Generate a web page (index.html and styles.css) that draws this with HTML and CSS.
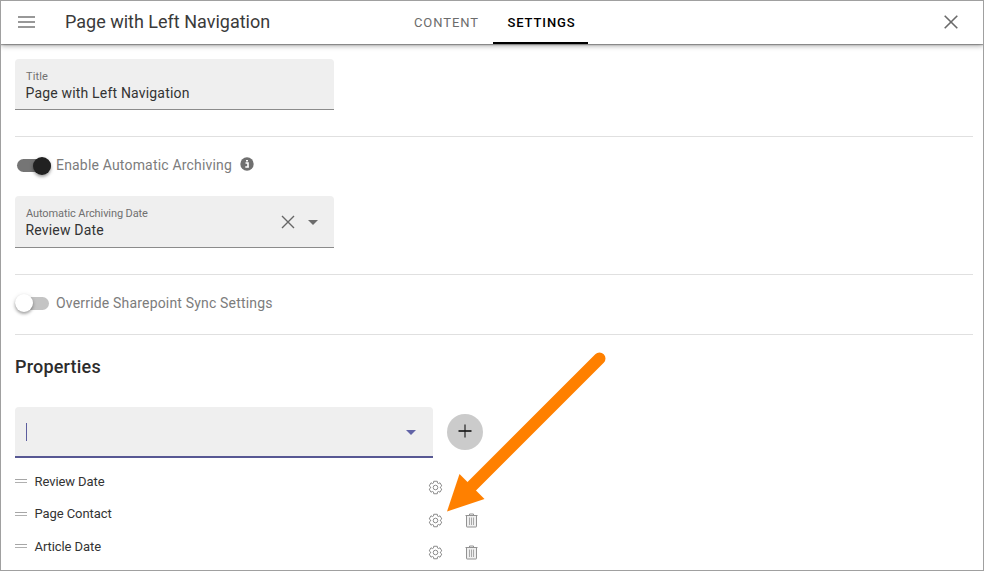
FILE: index.html
```html
<!DOCTYPE html>
<html lang="en">
<head>
<meta charset="utf-8">
<title>Page settings</title>
<link rel="stylesheet" href="styles.css">
</head>
<body>
<svg class="defs" width="0" height="0">
  <symbol id="gear" viewBox="-7.5 -7.5 15 15">
    <path d="M-1.79-6.25H1.79L1.99-4.48 2.88-3.96 4.52-4.68 6.31-1.57 4.87-.51V.51L6.31 1.57 4.52 4.68 2.88 3.96 1.99 4.48 1.79 6.25H-1.79L-1.99 4.48-2.88 3.96-4.52 4.68-6.31 1.57-4.87.51V-.51L-6.31-1.57-4.52-4.68-2.88-3.96-1.99-4.48Z"/>
    <circle r="2.3"/>
  </symbol>
  <symbol id="trash" viewBox="0 0 13 15">
    <path class="bin" d="M1.500 2.500v11q0 .5.500.5h9q.5 0 .5-.5V2.500"/>
    <path d="M.5 2.500h12M4.500 2.500v-1.500h4v1.500"/>
    <path class="slats" d="M4.500 4.500v7.500M6.500 4.500v7.500M8.500 4.500v7.500"/>
  </symbol>
</svg>
<div class="window">
  <header class="bar">
    <svg class="menu" viewBox="0 0 18 12"><path d="M0 1h17M0 6h17M0 11h17"/></svg>
    <h1 class="page-title">Page with Left Navigation</h1>
    <nav class="tabs">
      <a class="tab">CONTENT</a>
      <a class="tab active">SETTINGS</a>
    </nav>
    <svg class="close" viewBox="0 0 14 14"><path d="M.7.7l12.600 12.600M13.300.7L.7 13.300"/></svg>
  </header>
  <main class="content">
    <div class="field title-field">
      <div class="field-text"><label class="label">Title</label><span class="value">Page with Left Navigation</span></div>
    </div>
    <section class="toggle-section">
      <div class="toggle-row">
        <span class="switch on"><i class="knob"></i></span>
        <span class="toggle-label archive">Enable Automatic Archiving</span>
        <svg class="info" viewBox="0 0 14 14"><circle cx="7" cy="7" r="6.700"/><path d="M5.500 6h2.500v4M5.300 10h3.600M6 3.700h2"/></svg>
      </div>
      <div class="field date-field">
        <div class="field-text"><label class="label">Automatic Archiving Date</label><span class="value">Review Date</span></div>
        <svg class="clear" viewBox="0 0 14 14"><path d="M1 1l12 12M13 1L1 13"/></svg>
        <i class="caret"></i>
      </div>
    </section>
    <section class="sync">
      <span class="switch off"><i class="knob"></i></span>
      <span class="toggle-label override">Override Sharepoint Sync Settings</span>
    </section>
    <section class="properties">
      <h2 class="heading">Properties</h2>
      <div class="picker">
        <div class="field focus"><i class="cursor"></i><i class="caret"></i></div>
        <button class="add"><svg viewBox="0 0 14 14"><path class="stem" d="M7 .5v13"/><path d="M.5 7h13"/></svg></button>
      </div>
      <ul class="list">
        <li class="item"><i class="grip"></i><span class="name">Review Date</span><svg class="gear"><use href="#gear"/></svg></li>
        <li class="item"><i class="grip"></i><span class="name">Page Contact</span><svg class="gear"><use href="#gear"/></svg><svg class="trash"><use href="#trash"/></svg></li>
        <li class="item"><i class="grip"></i><span class="name">Article Date</span><svg class="gear"><use href="#gear"/></svg><svg class="trash"><use href="#trash"/></svg></li>
      </ul>
    </section>
  </main>
  <svg class="arrow" viewBox="0 0 160 162"><path class="shaft" d="M153.500 8.500L22 140"/><path class="head" d="M1 161.500L13.500 124 38.500 149Z"/></svg>
</div>
</body>
</html>
```

FILE: styles.css
```css
* { box-sizing: border-box; }
body { margin: 0; font-family: Roboto, "Liberation Sans", sans-serif; color: #2b2b2b; background: #fff; }
.defs { display: block; position: absolute; }
.window { position: relative; width: 984px; height: 571px; border: 1px solid #a0a0a0; overflow: hidden; }
svg { display: block; fill: none; flex: none; }

.bar { position: relative; display: flex; align-items: center; height: 43px; padding: 0 25px 0 16.5px; background: #fff; box-shadow: 0 1px 1px rgba(0,0,0,.3), 0 2px 5px rgba(0,0,0,.32); }
.menu { width: 18px; height: 12px; margin-bottom: 1px; stroke: #777; stroke-width: 1.6; }
.page-title { margin: 0 0 2px 29.5px; width: 333px; font-size: 18px; font-weight: 400; line-height: 41px; white-space: nowrap; color: #3a3a3a; }
.tabs { display: flex; flex: none; align-self: stretch; margin-left: -6px; }
.tab { display: flex; align-items: center; justify-content: center; width: 101px; padding: 2px 0 0 8px; font-size: 13px; font-weight: 400; letter-spacing: .95px; color: #6c6c6c; border-bottom: 2px solid transparent; }
.tab.active { width: 95px; padding-left: 2px; font-weight: 500; letter-spacing: .9px; color: #000; border-color: #000; }
.close { width: 14px; height: 14px; margin: 0 0 2px auto; stroke: #6a6a6a; stroke-width: 1.6; }

.content { padding: 15px 10px 0 14px; }
.field { display: flex; align-items: center; width: 319px; height: 51px; padding: 0 16px 0 11px; background: #efefef; border-radius: 4px 4px 0 0; border-bottom: 1px solid #8b8b8b; }
.field-text { display: flex; flex-direction: column; flex: 1; padding-top: 7px; }
.label { font-size: 11px; line-height: 13px; letter-spacing: -.1px; color: #707070; }
.title-field .label { letter-spacing: .1px; }
.value { font-size: 14px; line-height: 20px; letter-spacing: .18px; color: #333; margin-left: -.5px; }
.date-field .field-text { padding-top: 4px; }
.title-field .field-text { padding-top: 5px; }
.toggle-section { margin-top: 26px; border-top: 1px solid #e0e0e0; border-bottom: 1px solid #e0e0e0; height: 139px; padding-top: 17px; }
.toggle-row, .sync { display: flex; align-items: center; }
.toggle-row { height: 22px; }
.date-field { margin-top: 20px; height: 52px; }
.switch { display: flex; align-items: center; flex: none; width: 34px; height: 13px; margin-top: 1px; border-radius: 7px; background: #757575; }
.switch.on { margin-left: 2px; justify-content: flex-end; }
.switch.off { background: #c4c4c4; }
.knob { flex: none; width: 18px; height: 18px; border-radius: 50%; background: #212121; box-shadow: 0 2px 3px rgba(0,0,0,.3), 0 1px 5px rgba(0,0,0,.12); }
.off .knob { background: #fff; }
.toggle-label { font-size: 14px; line-height: 20px; letter-spacing: .18px; color: #7c7c7c; white-space: nowrap; }
.archive { margin-left: 5px; }
.override { margin-left: 7px; }
.info { width: 14px; height: 14px; margin: -3px 0 0 7.5px; }
.info circle { fill: #707070; }
.info path { stroke: #fff; stroke-width: 1.6; }
.clear { width: 14px; height: 14px; margin-right: 1.5px; stroke: #666; stroke-width: 1.4; }
.caret { width: 0; height: 0; margin: 1px 0 0 12px; border: 5px solid transparent; border-top-color: #6c6c6c; border-bottom: 0; }
.sync { height: 60px; border-bottom: 1px solid #e0e0e0; padding-bottom: 4px; }

.heading { margin: 20px 0 0; font-size: 18px; font-weight: 500; line-height: 24px; letter-spacing: .2px; color: #2c2c2c; }
.picker { display: flex; align-items: center; margin-top: 28px; }
.focus { width: 418px; border-bottom: 2px solid #575893; justify-content: space-between; padding-right: 17px; }
.cursor { width: 1px; height: 18px; background: #5c5d9e; }
.focus .caret { border-top-color: #6264a7; margin-top: 2px; }
.add { display: grid; place-items: center; width: 36px; height: 36px; margin: 0 0 2px 14px; padding: 0 0 1px; border: 0; border-radius: 50%; background: #cbcbcb; }
.add svg { width: 14px; height: 14px; stroke: #1b1b1b; stroke-width: 1.7; }
.add .stem { stroke: #444; stroke-width: 1.5; }
.list { list-style: none; margin: 7px 0 0; padding: 0; }
.item { display: flex; align-items: flex-start; height: 32.5px; }
.grip { width: 12px; height: 4px; margin-top: 14px; border-top: 1px solid #a6a6a6; border-bottom: 1px solid #b0b0b0; }
.name { width: 386px; margin: 6.5px 0 0 7.5px; font-size: 13px; line-height: 20px; letter-spacing: -.08px; color: #333; }
.gear { width: 15px; height: 15px; margin: 15px 0 0 7px; stroke: #8c8c8c; stroke-width: 1; }
.trash { width: 13px; height: 15px; margin: 15px 0 0 22px; stroke: #929292; stroke-width: 1; }
.bin { fill: #efefef; }
.slats { stroke: #a8a8a8; }
.arrow { position: absolute; left: 444.5px; top: 348.5px; width: 160px; height: 162px; }
.shaft { stroke: #ff8000; stroke-width: 12; stroke-linecap: round; }
.head { fill: #ff8000; }
```
